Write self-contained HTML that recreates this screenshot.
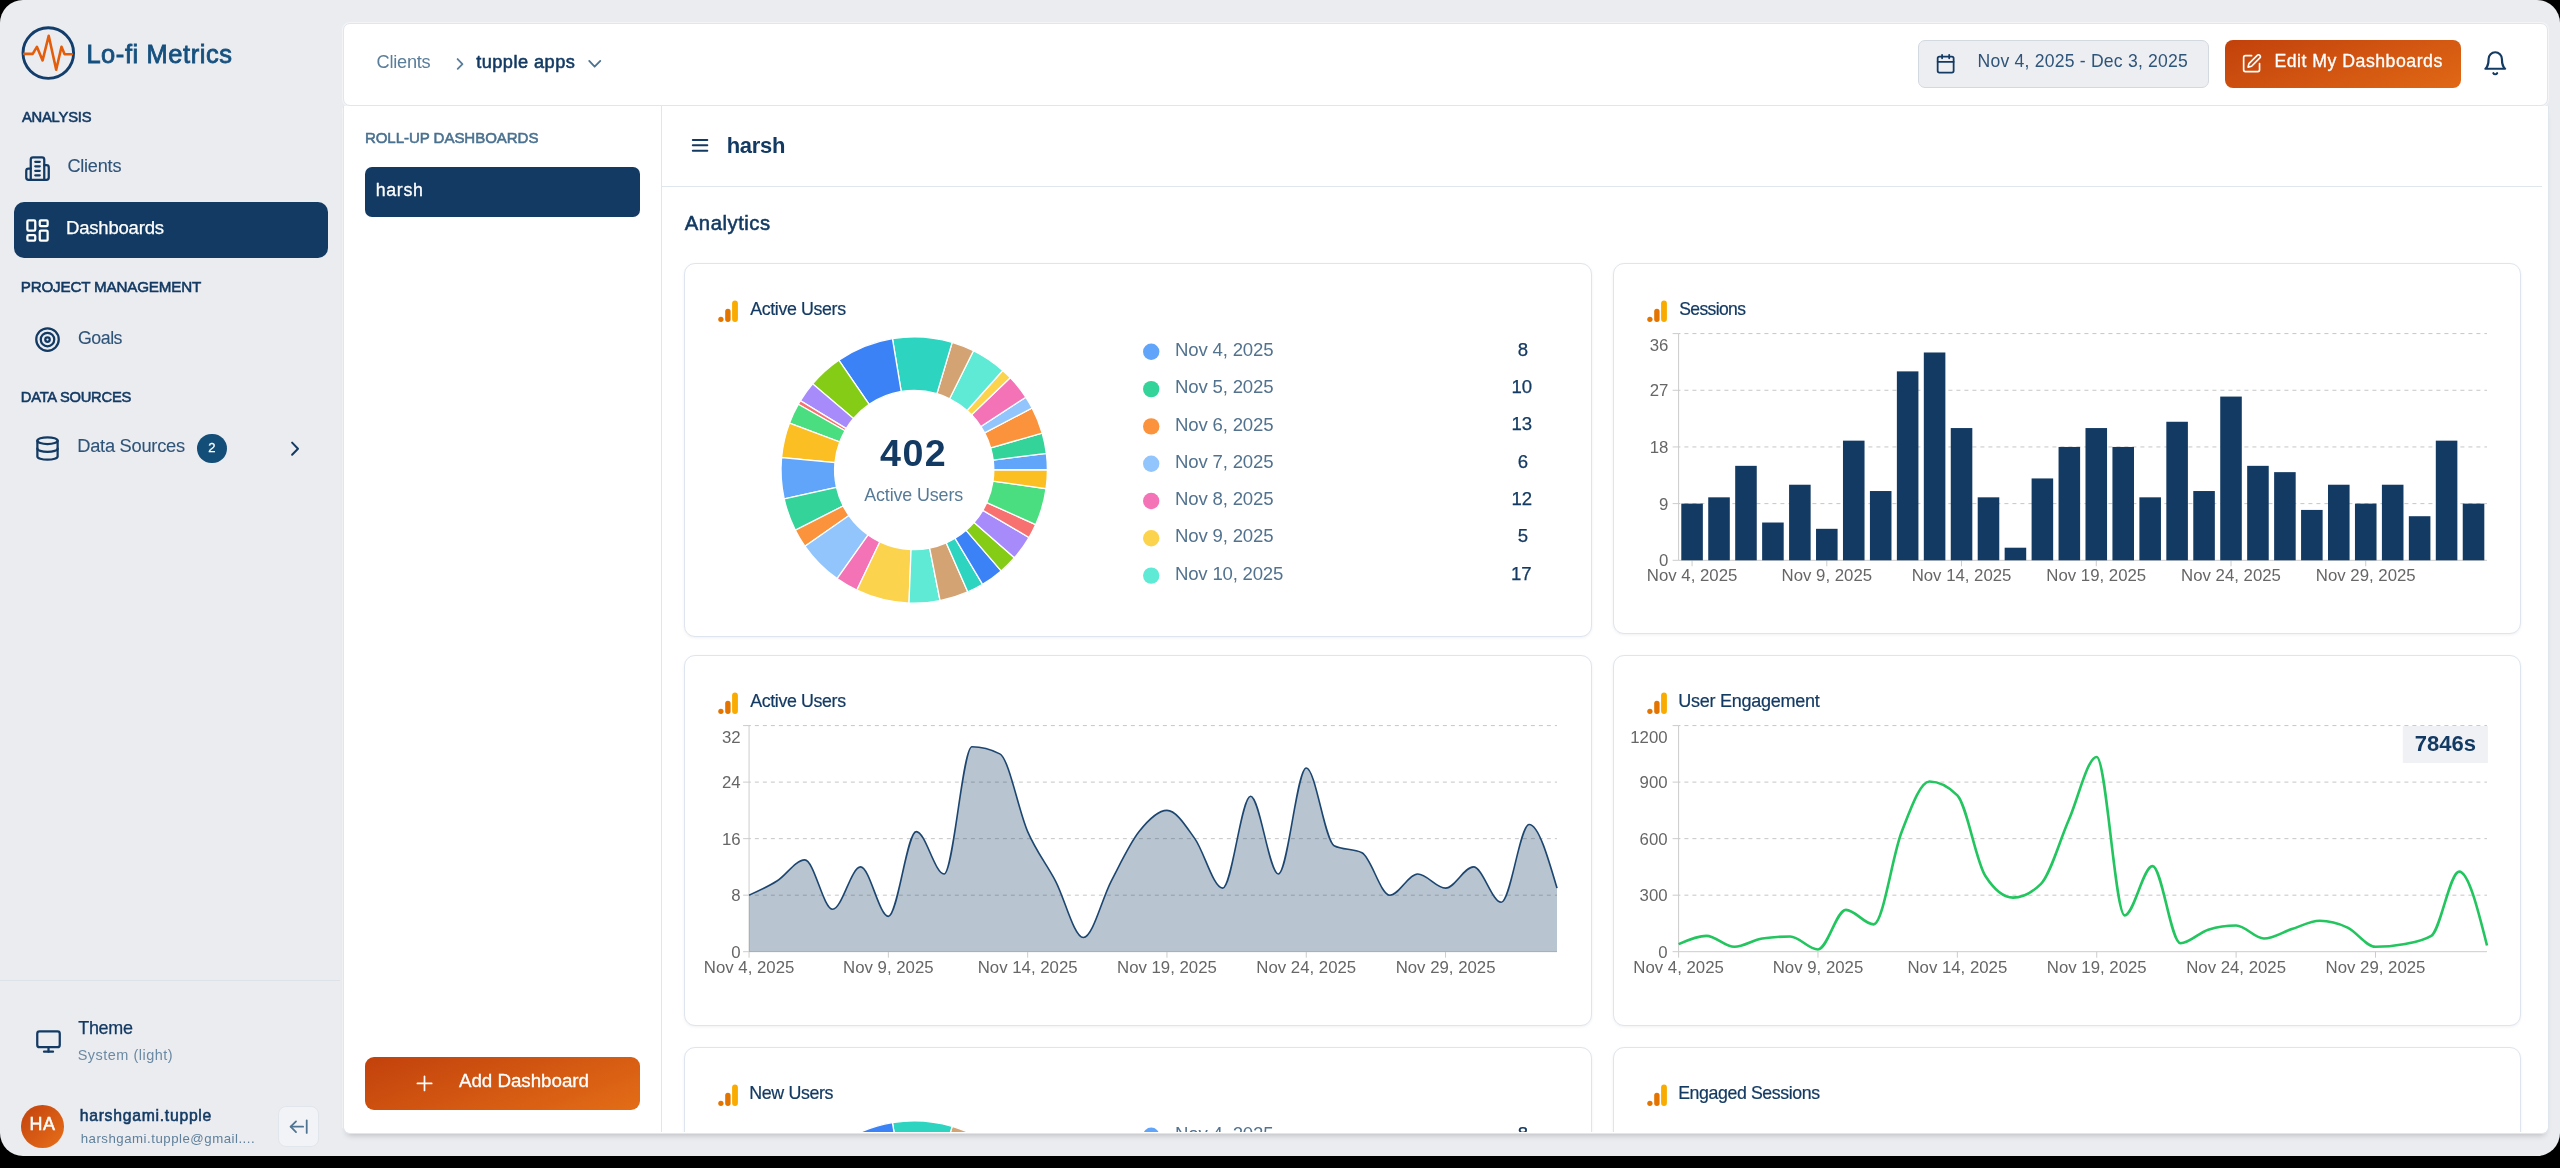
<!DOCTYPE html><html><head><meta charset="utf-8"><style>
*{margin:0;padding:0;box-sizing:border-box}
html,body{width:2560px;height:1168px;overflow:hidden;background:#000}
body{position:relative;font-family:"Liberation Sans",sans-serif}
#root{position:absolute;left:0;top:0;width:2560px;height:1168px;will-change:transform}
.t{position:absolute;white-space:nowrap}
.abs{position:absolute}
</style></head><body><div id="root">
<div class="abs" style="left:0;top:0;width:2560px;height:1156px;background:#ebecf0;border-radius:23px"></div>
<svg class="abs" style="left:0;top:0" width="100" height="100" viewBox="0 0 100 100" fill="none"><circle cx="48.3" cy="53.05" r="25.3" stroke="#133e6b" stroke-width="2.9"/><path d="M24.2 53.9H32.7L36.9 46.8L42.6 60.4L48.7 35.8L56.2 69.7L61.5 46.8L64.6 54.2H71.9" stroke="#e35d0a" stroke-width="2.6" stroke-linecap="round" stroke-linejoin="round"/></svg>
<svg style="position:absolute;left:23.90px;top:154.60px;" width="27.00" height="27.00" viewBox="0 0 24 24" fill="none" stroke="#133a63" stroke-width="2.00" stroke-linecap="round" stroke-linejoin="round"><path d="M6 22V4a2 2 0 0 1 2-2h8a2 2 0 0 1 2 2v18Z"/><path d="M6 12H4a2 2 0 0 0-2 2v6a2 2 0 0 0 2 2h2"/><path d="M18 9h2a2 2 0 0 1 2 2v9a2 2 0 0 1-2 2h-2"/><path d="M10 6h4"/><path d="M10 10h4"/><path d="M10 14h4"/><path d="M10 18h4"/></svg>
<div class="abs" style="left:13.75px;top:202px;width:314px;height:56px;border-radius:10px;background:#133a63"></div>
<svg style="position:absolute;left:23.90px;top:216.60px;" width="27.00" height="27.00" viewBox="0 0 24 24" fill="none" stroke="#ffffff" stroke-width="2.00" stroke-linecap="round" stroke-linejoin="round"><rect width="7" height="9" x="3" y="3" rx="1"/><rect width="7" height="5" x="14" y="3" rx="1"/><rect width="7" height="9" x="14" y="12" rx="1"/><rect width="7" height="5" x="3" y="16" rx="1"/></svg>
<svg style="position:absolute;left:34.40px;top:326.40px;" width="27.00" height="27.00" viewBox="0 0 24 24" fill="none" stroke="#133a63" stroke-width="2.00" stroke-linecap="round" stroke-linejoin="round"><circle cx="12" cy="12" r="10"/><circle cx="12" cy="12" r="6"/><circle cx="12" cy="12" r="2"/></svg>
<svg style="position:absolute;left:34.40px;top:434.90px;" width="27.00" height="27.00" viewBox="0 0 24 24" fill="none" stroke="#133a63" stroke-width="2.00" stroke-linecap="round" stroke-linejoin="round"><ellipse cx="12" cy="5" rx="9" ry="3"/><path d="M3 5V19A9 3 0 0 0 21 19V5"/><path d="M3 12A9 3 0 0 0 21 12"/></svg>
<div class="abs" style="left:196.9px;top:433.6px;width:29.7px;height:29.7px;border-radius:50%;background:#134e78"></div>
<svg class="abs" style="left:280px;top:436px" width="24" height="24" viewBox="0 0 24 24" fill="none" stroke="#133a63" stroke-width="2" stroke-linecap="round" stroke-linejoin="round"><path d="M12.1 6.6L18 12.7L12.1 18.8"/></svg>
<div class="abs" style="left:0;top:979.5px;width:340px;height:1px;background:#dde2e8"></div>
<svg style="position:absolute;left:34.60px;top:1028.05px;" width="27.00" height="27.00" viewBox="0 0 24 24" fill="none" stroke="#133a63" stroke-width="2.00" stroke-linecap="round" stroke-linejoin="round"><rect width="20" height="14" x="2" y="3" rx="2"/><line x1="8" x2="16" y1="21" y2="21"/><line x1="12" x2="12" y1="17" y2="21"/></svg>
<div class="abs" style="left:21.4px;top:1105.3px;width:42.6px;height:42.6px;border-radius:50%;background:linear-gradient(135deg,#c2410c,#e8701a)"></div>
<div class="abs" style="left:278px;top:1106px;width:41.4px;height:41.4px;border-radius:8px;background:#f1f3f6;border:1px solid #e1e6ed"></div>
<svg style="position:absolute;left:288.00px;top:1115.90px;" width="21.40" height="21.40" viewBox="0 0 24 24" fill="none" stroke="#4f7491" stroke-width="2.00" stroke-linecap="round" stroke-linejoin="round"><path d="m9 6-6 6 6 6"/><path d="M3 12h14"/><path d="M21 19V5"/></svg>
<div class="abs" style="left:343px;top:22.5px;width:2205px;height:83px;background:#fff;border:1px solid #e0e6ee;border-radius:7px;box-shadow:0 0 0 1px rgba(255,255,255,0.45)"></div>
<svg class="abs" style="left:440px;top:40px" width="180" height="40" viewBox="0 0 180 40" fill="none" stroke-width="1.8" stroke-linecap="round" stroke-linejoin="round"><path d="M17.6 19.05L22.45 24.07L17.7 28.8" stroke="#5a7d99"/><path d="M149.2 20.9L154.65 26.7L160.3 20.9" stroke="#4d7391"/></svg>
<div class="abs" style="left:1917.8px;top:40.4px;width:290.8px;height:47.2px;border-radius:7px;background:#eceef2;border:1px solid #d3d9e1"></div>
<svg style="position:absolute;left:1935.35px;top:53.35px;" width="21.30" height="21.30" viewBox="0 0 24 24" fill="none" stroke="#133a63" stroke-width="2.00" stroke-linecap="round" stroke-linejoin="round"><rect width="18" height="18" x="3" y="4" rx="2" ry="2"/><line x1="16" x2="16" y1="2" y2="6"/><line x1="8" x2="8" y1="2" y2="6"/><line x1="3" x2="21" y1="10" y2="10"/></svg>
<div class="abs" style="left:2225px;top:40.4px;width:236px;height:47.2px;border-radius:8px;background:linear-gradient(160deg,#c2410c 0%,#e06815 100%)"></div>
<svg style="position:absolute;left:2241.40px;top:52.50px;" width="21.20" height="21.20" viewBox="0 0 24 24" fill="none" stroke="#ffffff" stroke-width="1.90" stroke-linecap="round" stroke-linejoin="round"><path d="M12 3H5a2 2 0 0 0-2 2v14a2 2 0 0 0 2 2h14a2 2 0 0 0 2-2v-7"/><path d="M18.375 2.625a2.121 2.121 0 1 1 3 3L12 15l-4 1 1-4Z"/></svg>
<svg style="position:absolute;left:2482.40px;top:50.20px;" width="26.50" height="26.50" viewBox="0 0 24 24" fill="none" stroke="#133a63" stroke-width="1.95" stroke-linecap="round" stroke-linejoin="round"><path d="M6 8a6 6 0 0 1 12 0c0 7 3 9 3 9H3s3-2 3-9"/><path d="M10.3 21a1.94 1.94 0 0 0 3.4 0"/></svg>
<div class="abs" style="left:343px;top:105.5px;width:2206px;height:1028px;background:#fff;border:1px solid #e0e6ee;border-top:none;border-radius:0 0 7px 7px;box-shadow:0 5px 6px -4px rgba(0,0,0,0.22)"></div>
<div class="abs" style="left:661px;top:106px;width:1px;height:1026px;background:#e0e6ee"></div>
<div class="abs" style="left:342px;top:108px;width:1px;height:1020px;background:rgba(255,255,255,0.4)"></div>
<div class="abs" style="left:662px;top:185.5px;width:1880px;height:1px;background:#e0e6ee"></div>
<div class="abs" style="left:365.3px;top:166.6px;width:274.8px;height:50.9px;border-radius:7px;background:#133a63"></div>
<div class="abs" style="left:365.3px;top:1057.3px;width:274.8px;height:53px;border-radius:9px;background:linear-gradient(160deg,#c2410c 0%,#e36d17 100%)"></div>
<svg class="abs" style="left:416px;top:1075px" width="18" height="18" viewBox="0 0 18 18" fill="none" stroke="#fff" stroke-width="1.7" stroke-linecap="round"><path d="M8.5 1.3V15.4M1.4 8.4H15.7"/></svg>
<svg class="abs" style="left:684px;top:128px" width="32" height="32" viewBox="0 0 32 32" fill="none" stroke="#133a63" stroke-width="2" stroke-linecap="round"><path d="M8.8 12.05H23.3M8.8 17.26H23.3M8.8 22.7H23.3"/></svg>
<div class="abs" style="left:0;top:0;width:2560px;height:1168px;clip-path:inset(187px 18px 36px 662px)"><div class="abs" style="left:684px;top:263px;width:908px;height:374px;border:1px solid #dfe5ee;border-radius:11px;background:#fff;box-shadow:0 1px 3px rgba(16,24,40,0.06)"></div>
<div class="abs" style="left:1613px;top:263px;width:908px;height:371px;border:1px solid #dfe5ee;border-radius:11px;background:#fff;box-shadow:0 1px 3px rgba(16,24,40,0.06)"></div>
<div class="abs" style="left:684px;top:655px;width:908px;height:371px;border:1px solid #dfe5ee;border-radius:11px;background:#fff;box-shadow:0 1px 3px rgba(16,24,40,0.06)"></div>
<div class="abs" style="left:1613px;top:655px;width:908px;height:371px;border:1px solid #dfe5ee;border-radius:11px;background:#fff;box-shadow:0 1px 3px rgba(16,24,40,0.06)"></div>
<div class="abs" style="left:684px;top:1047px;width:908px;height:401px;border:1px solid #dfe5ee;border-radius:11px;background:#fff;box-shadow:0 1px 3px rgba(16,24,40,0.06)"></div>
<div class="abs" style="left:1613px;top:1047px;width:908px;height:401px;border:1px solid #dfe5ee;border-radius:11px;background:#fff;box-shadow:0 1px 3px rgba(16,24,40,0.06)"></div>
<svg class="abs" style="left:716.00px;top:300.00px" width="22" height="24" viewBox="0 0 22 24"><circle cx="4.9" cy="19.3" r="2.65" fill="#e37400"/><rect x="9.2" y="8.7" width="5.4" height="13.3" rx="2.7" fill="#e37400"/><rect x="16.1" y="0.6" width="5.8" height="21.4" rx="2.9" fill="#f9ab00"/></svg>
<svg class="abs" style="left:1645.00px;top:300.00px" width="22" height="24" viewBox="0 0 22 24"><circle cx="4.9" cy="19.3" r="2.65" fill="#e37400"/><rect x="9.2" y="8.7" width="5.4" height="13.3" rx="2.7" fill="#e37400"/><rect x="16.1" y="0.6" width="5.8" height="21.4" rx="2.9" fill="#f9ab00"/></svg>
<svg class="abs" style="left:716.00px;top:692.00px" width="22" height="24" viewBox="0 0 22 24"><circle cx="4.9" cy="19.3" r="2.65" fill="#e37400"/><rect x="9.2" y="8.7" width="5.4" height="13.3" rx="2.7" fill="#e37400"/><rect x="16.1" y="0.6" width="5.8" height="21.4" rx="2.9" fill="#f9ab00"/></svg>
<svg class="abs" style="left:1645.00px;top:692.00px" width="22" height="24" viewBox="0 0 22 24"><circle cx="4.9" cy="19.3" r="2.65" fill="#e37400"/><rect x="9.2" y="8.7" width="5.4" height="13.3" rx="2.7" fill="#e37400"/><rect x="16.1" y="0.6" width="5.8" height="21.4" rx="2.9" fill="#f9ab00"/></svg>
<svg class="abs" style="left:716.00px;top:1084.00px" width="22" height="24" viewBox="0 0 22 24"><circle cx="4.9" cy="19.3" r="2.65" fill="#e37400"/><rect x="9.2" y="8.7" width="5.4" height="13.3" rx="2.7" fill="#e37400"/><rect x="16.1" y="0.6" width="5.8" height="21.4" rx="2.9" fill="#f9ab00"/></svg>
<svg class="abs" style="left:1645.00px;top:1084.00px" width="22" height="24" viewBox="0 0 22 24"><circle cx="4.9" cy="19.3" r="2.65" fill="#e37400"/><rect x="9.2" y="8.7" width="5.4" height="13.3" rx="2.7" fill="#e37400"/><rect x="16.1" y="0.6" width="5.8" height="21.4" rx="2.9" fill="#f9ab00"/></svg>
<svg class="abs" style="left:0;top:0" width="2560" height="1168" viewBox="0 0 2560 1168" font-family="Liberation Sans, sans-serif"><line x1="1672.60" x2="1678.60" y1="560.30" y2="560.30" stroke="#cccccc"/><text x="1668.40" y="566.30" text-anchor="end" fill="#666666" font-size="16.8">0</text><line x1="1678.60" x2="2487.00" y1="503.62" y2="503.62" stroke="#c6c6c6" stroke-dasharray="4 4" stroke-dashoffset="2.2"/><line x1="1672.60" x2="1678.60" y1="503.62" y2="503.62" stroke="#cccccc"/><text x="1668.40" y="509.62" text-anchor="end" fill="#666666" font-size="16.8">9</text><line x1="1678.60" x2="2487.00" y1="446.95" y2="446.95" stroke="#c6c6c6" stroke-dasharray="4 4" stroke-dashoffset="2.2"/><line x1="1672.60" x2="1678.60" y1="446.95" y2="446.95" stroke="#cccccc"/><text x="1668.40" y="452.95" text-anchor="end" fill="#666666" font-size="16.8">18</text><line x1="1678.60" x2="2487.00" y1="390.27" y2="390.27" stroke="#c6c6c6" stroke-dasharray="4 4" stroke-dashoffset="2.2"/><line x1="1672.60" x2="1678.60" y1="390.27" y2="390.27" stroke="#cccccc"/><text x="1668.40" y="396.27" text-anchor="end" fill="#666666" font-size="16.8">27</text><line x1="1678.60" x2="2487.00" y1="333.60" y2="333.60" stroke="#c6c6c6" stroke-dasharray="4 4" stroke-dashoffset="2.2"/><line x1="1672.60" x2="1678.60" y1="333.60" y2="333.60" stroke="#cccccc"/><text x="1668.40" y="350.60" text-anchor="end" fill="#666666" font-size="16.8">36</text><line x1="1678.60" x2="1678.60" y1="333.60" y2="560.30" stroke="#cccccc"/><line x1="1678.60" x2="2487.00" y1="560.30" y2="560.30" stroke="#cccccc"/><line x1="1692.07" x2="1692.07" y1="560.30" y2="566.30" stroke="#cccccc"/><text x="1692.07" y="581.30" text-anchor="middle" fill="#666666" font-size="16.8">Nov 4, 2025</text><line x1="1826.81" x2="1826.81" y1="560.30" y2="566.30" stroke="#cccccc"/><text x="1826.81" y="581.30" text-anchor="middle" fill="#666666" font-size="16.8">Nov 9, 2025</text><line x1="1961.54" x2="1961.54" y1="560.30" y2="566.30" stroke="#cccccc"/><text x="1961.54" y="581.30" text-anchor="middle" fill="#666666" font-size="16.8">Nov 14, 2025</text><line x1="2096.27" x2="2096.27" y1="560.30" y2="566.30" stroke="#cccccc"/><text x="2096.27" y="581.30" text-anchor="middle" fill="#666666" font-size="16.8">Nov 19, 2025</text><line x1="2231.01" x2="2231.01" y1="560.30" y2="566.30" stroke="#cccccc"/><text x="2231.01" y="581.30" text-anchor="middle" fill="#666666" font-size="16.8">Nov 24, 2025</text><line x1="2365.74" x2="2365.74" y1="560.30" y2="566.30" stroke="#cccccc"/><text x="2365.74" y="581.30" text-anchor="middle" fill="#666666" font-size="16.8">Nov 29, 2025</text><rect x="1681.29" y="503.62" width="21.56" height="56.67" fill="#133a63"/><rect x="1708.24" y="497.33" width="21.56" height="62.97" fill="#133a63"/><rect x="1735.19" y="465.84" width="21.56" height="94.46" fill="#133a63"/><rect x="1762.13" y="522.52" width="21.56" height="37.78" fill="#133a63"/><rect x="1789.08" y="484.73" width="21.56" height="75.57" fill="#133a63"/><rect x="1816.03" y="528.81" width="21.56" height="31.49" fill="#133a63"/><rect x="1842.97" y="440.65" width="21.56" height="119.65" fill="#133a63"/><rect x="1869.92" y="491.03" width="21.56" height="69.27" fill="#133a63"/><rect x="1896.87" y="371.38" width="21.56" height="188.92" fill="#133a63"/><rect x="1923.81" y="352.49" width="21.56" height="207.81" fill="#133a63"/><rect x="1950.76" y="428.06" width="21.56" height="132.24" fill="#133a63"/><rect x="1977.71" y="497.33" width="21.56" height="62.97" fill="#133a63"/><rect x="2004.65" y="547.71" width="21.56" height="12.59" fill="#133a63"/><rect x="2031.60" y="478.44" width="21.56" height="81.86" fill="#133a63"/><rect x="2058.55" y="446.95" width="21.56" height="113.35" fill="#133a63"/><rect x="2085.49" y="428.06" width="21.56" height="132.24" fill="#133a63"/><rect x="2112.44" y="446.95" width="21.56" height="113.35" fill="#133a63"/><rect x="2139.39" y="497.33" width="21.56" height="62.97" fill="#133a63"/><rect x="2166.33" y="421.76" width="21.56" height="138.54" fill="#133a63"/><rect x="2193.28" y="491.03" width="21.56" height="69.27" fill="#133a63"/><rect x="2220.23" y="396.57" width="21.56" height="163.73" fill="#133a63"/><rect x="2247.17" y="465.84" width="21.56" height="94.46" fill="#133a63"/><rect x="2274.12" y="472.14" width="21.56" height="88.16" fill="#133a63"/><rect x="2301.07" y="509.92" width="21.56" height="50.38" fill="#133a63"/><rect x="2328.01" y="484.73" width="21.56" height="75.57" fill="#133a63"/><rect x="2354.96" y="503.62" width="21.56" height="56.67" fill="#133a63"/><rect x="2381.91" y="484.73" width="21.56" height="75.57" fill="#133a63"/><rect x="2408.85" y="516.22" width="21.56" height="44.08" fill="#133a63"/><rect x="2435.80" y="440.65" width="21.56" height="119.65" fill="#133a63"/><rect x="2462.75" y="503.62" width="21.56" height="56.67" fill="#133a63"/><line x1="743.07" x2="749.07" y1="951.70" y2="951.70" stroke="#cccccc"/><text x="740.57" y="957.70" text-anchor="end" fill="#666666" font-size="16.8">0</text><line x1="749.07" x2="1557.00" y1="895.18" y2="895.18" stroke="#c6c6c6" stroke-dasharray="4 4" stroke-dashoffset="2.2"/><line x1="743.07" x2="749.07" y1="895.18" y2="895.18" stroke="#cccccc"/><text x="740.57" y="901.18" text-anchor="end" fill="#666666" font-size="16.8">8</text><line x1="749.07" x2="1557.00" y1="838.65" y2="838.65" stroke="#c6c6c6" stroke-dasharray="4 4" stroke-dashoffset="2.2"/><line x1="743.07" x2="749.07" y1="838.65" y2="838.65" stroke="#cccccc"/><text x="740.57" y="844.65" text-anchor="end" fill="#666666" font-size="16.8">16</text><line x1="749.07" x2="1557.00" y1="782.12" y2="782.12" stroke="#c6c6c6" stroke-dasharray="4 4" stroke-dashoffset="2.2"/><line x1="743.07" x2="749.07" y1="782.12" y2="782.12" stroke="#cccccc"/><text x="740.57" y="788.12" text-anchor="end" fill="#666666" font-size="16.8">24</text><line x1="749.07" x2="1557.00" y1="725.60" y2="725.60" stroke="#c6c6c6" stroke-dasharray="4 4" stroke-dashoffset="2.2"/><line x1="743.07" x2="749.07" y1="725.60" y2="725.60" stroke="#cccccc"/><text x="740.57" y="742.60" text-anchor="end" fill="#666666" font-size="16.8">32</text><line x1="749.07" x2="749.07" y1="725.60" y2="951.70" stroke="#cccccc"/><line x1="749.07" x2="1557.00" y1="951.70" y2="951.70" stroke="#cccccc"/><line x1="749.07" x2="749.07" y1="951.70" y2="957.70" stroke="#cccccc"/><text x="749.07" y="972.70" text-anchor="middle" fill="#666666" font-size="16.8">Nov 4, 2025</text><line x1="888.37" x2="888.37" y1="951.70" y2="957.70" stroke="#cccccc"/><text x="888.37" y="972.70" text-anchor="middle" fill="#666666" font-size="16.8">Nov 9, 2025</text><line x1="1027.67" x2="1027.67" y1="951.70" y2="957.70" stroke="#cccccc"/><text x="1027.67" y="972.70" text-anchor="middle" fill="#666666" font-size="16.8">Nov 14, 2025</text><line x1="1166.96" x2="1166.96" y1="951.70" y2="957.70" stroke="#cccccc"/><text x="1166.96" y="972.70" text-anchor="middle" fill="#666666" font-size="16.8">Nov 19, 2025</text><line x1="1306.26" x2="1306.26" y1="951.70" y2="957.70" stroke="#cccccc"/><text x="1306.26" y="972.70" text-anchor="middle" fill="#666666" font-size="16.8">Nov 24, 2025</text><line x1="1445.56" x2="1445.56" y1="951.70" y2="957.70" stroke="#cccccc"/><text x="1445.56" y="972.70" text-anchor="middle" fill="#666666" font-size="16.8">Nov 29, 2025</text><path d="M749.07,895.18C758.36,891.05,767.64,886.93,776.93,881.04C786.22,875.16,795.50,859.85,804.79,859.85C814.08,859.85,823.36,909.31,832.65,909.31C841.94,909.31,851.22,866.91,860.51,866.91C869.80,866.91,879.08,916.37,888.37,916.37C897.65,916.37,906.94,831.58,916.23,831.58C925.51,831.58,934.80,873.98,944.09,873.98C953.37,873.98,962.66,746.80,971.95,746.80C981.23,746.80,990.52,749.15,999.81,753.86C1009.09,758.57,1018.38,810.39,1027.67,831.58C1036.95,852.78,1046.24,863.38,1055.53,881.04C1064.81,898.71,1074.10,937.57,1083.39,937.57C1092.67,937.57,1101.96,898.71,1111.25,881.04C1120.53,863.38,1129.82,843.36,1139.11,831.58C1148.39,819.81,1157.68,810.39,1166.96,810.39C1176.25,810.39,1185.54,825.70,1194.82,838.65C1204.11,851.60,1213.40,888.11,1222.68,888.11C1231.97,888.11,1241.26,796.26,1250.54,796.26C1259.83,796.26,1269.12,873.98,1278.40,873.98C1287.69,873.98,1296.98,767.99,1306.26,767.99C1315.55,767.99,1324.84,841.01,1334.12,845.72C1343.41,850.43,1352.70,848.07,1361.98,852.78C1371.27,857.49,1380.56,895.18,1389.84,895.18C1399.13,895.18,1408.42,873.98,1417.70,873.98C1426.99,873.98,1436.27,888.11,1445.56,888.11C1454.85,888.11,1464.13,866.91,1473.42,866.91C1482.71,866.91,1491.99,902.24,1501.28,902.24C1510.57,902.24,1519.85,824.52,1529.14,824.52C1538.43,824.52,1547.71,856.31,1557.00,888.11L1557.00,951.70L749.07,951.70Z" fill="#133a63" fill-opacity="0.3"/><path d="M749.07,895.18C758.36,891.05,767.64,886.93,776.93,881.04C786.22,875.16,795.50,859.85,804.79,859.85C814.08,859.85,823.36,909.31,832.65,909.31C841.94,909.31,851.22,866.91,860.51,866.91C869.80,866.91,879.08,916.37,888.37,916.37C897.65,916.37,906.94,831.58,916.23,831.58C925.51,831.58,934.80,873.98,944.09,873.98C953.37,873.98,962.66,746.80,971.95,746.80C981.23,746.80,990.52,749.15,999.81,753.86C1009.09,758.57,1018.38,810.39,1027.67,831.58C1036.95,852.78,1046.24,863.38,1055.53,881.04C1064.81,898.71,1074.10,937.57,1083.39,937.57C1092.67,937.57,1101.96,898.71,1111.25,881.04C1120.53,863.38,1129.82,843.36,1139.11,831.58C1148.39,819.81,1157.68,810.39,1166.96,810.39C1176.25,810.39,1185.54,825.70,1194.82,838.65C1204.11,851.60,1213.40,888.11,1222.68,888.11C1231.97,888.11,1241.26,796.26,1250.54,796.26C1259.83,796.26,1269.12,873.98,1278.40,873.98C1287.69,873.98,1296.98,767.99,1306.26,767.99C1315.55,767.99,1324.84,841.01,1334.12,845.72C1343.41,850.43,1352.70,848.07,1361.98,852.78C1371.27,857.49,1380.56,895.18,1389.84,895.18C1399.13,895.18,1408.42,873.98,1417.70,873.98C1426.99,873.98,1436.27,888.11,1445.56,888.11C1454.85,888.11,1464.13,866.91,1473.42,866.91C1482.71,866.91,1491.99,902.24,1501.28,902.24C1510.57,902.24,1519.85,824.52,1529.14,824.52C1538.43,824.52,1547.71,856.31,1557.00,888.11" fill="none" stroke="#1c4670" stroke-width="1.6"/><line x1="1672.60" x2="1678.60" y1="951.70" y2="951.70" stroke="#cccccc"/><text x="1667.60" y="957.70" text-anchor="end" fill="#666666" font-size="16.8">0</text><line x1="1678.60" x2="2487.00" y1="895.18" y2="895.18" stroke="#c6c6c6" stroke-dasharray="4 4" stroke-dashoffset="2.2"/><line x1="1672.60" x2="1678.60" y1="895.18" y2="895.18" stroke="#cccccc"/><text x="1667.60" y="901.18" text-anchor="end" fill="#666666" font-size="16.8">300</text><line x1="1678.60" x2="2487.00" y1="838.65" y2="838.65" stroke="#c6c6c6" stroke-dasharray="4 4" stroke-dashoffset="2.2"/><line x1="1672.60" x2="1678.60" y1="838.65" y2="838.65" stroke="#cccccc"/><text x="1667.60" y="844.65" text-anchor="end" fill="#666666" font-size="16.8">600</text><line x1="1678.60" x2="2487.00" y1="782.12" y2="782.12" stroke="#c6c6c6" stroke-dasharray="4 4" stroke-dashoffset="2.2"/><line x1="1672.60" x2="1678.60" y1="782.12" y2="782.12" stroke="#cccccc"/><text x="1667.60" y="788.12" text-anchor="end" fill="#666666" font-size="16.8">900</text><line x1="1678.60" x2="2487.00" y1="725.60" y2="725.60" stroke="#c6c6c6" stroke-dasharray="4 4" stroke-dashoffset="2.2"/><line x1="1672.60" x2="1678.60" y1="725.60" y2="725.60" stroke="#cccccc"/><text x="1667.60" y="742.60" text-anchor="end" fill="#666666" font-size="16.8">1200</text><line x1="1678.60" x2="1678.60" y1="725.60" y2="951.70" stroke="#cccccc"/><line x1="1678.60" x2="2487.00" y1="951.70" y2="951.70" stroke="#cccccc"/><line x1="1678.60" x2="1678.60" y1="951.70" y2="957.70" stroke="#cccccc"/><text x="1678.60" y="972.70" text-anchor="middle" fill="#666666" font-size="16.8">Nov 4, 2025</text><line x1="1817.98" x2="1817.98" y1="951.70" y2="957.70" stroke="#cccccc"/><text x="1817.98" y="972.70" text-anchor="middle" fill="#666666" font-size="16.8">Nov 9, 2025</text><line x1="1957.36" x2="1957.36" y1="951.70" y2="957.70" stroke="#cccccc"/><text x="1957.36" y="972.70" text-anchor="middle" fill="#666666" font-size="16.8">Nov 14, 2025</text><line x1="2096.74" x2="2096.74" y1="951.70" y2="957.70" stroke="#cccccc"/><text x="2096.74" y="972.70" text-anchor="middle" fill="#666666" font-size="16.8">Nov 19, 2025</text><line x1="2236.12" x2="2236.12" y1="951.70" y2="957.70" stroke="#cccccc"/><text x="2236.12" y="972.70" text-anchor="middle" fill="#666666" font-size="16.8">Nov 24, 2025</text><line x1="2375.50" x2="2375.50" y1="951.70" y2="957.70" stroke="#cccccc"/><text x="2375.50" y="972.70" text-anchor="middle" fill="#666666" font-size="16.8">Nov 29, 2025</text><path d="M1678.60,944.16C1687.89,940.02,1697.18,935.87,1706.48,935.87C1715.77,935.87,1725.06,946.80,1734.35,946.80C1743.64,946.80,1752.94,939.89,1762.23,938.51C1771.52,937.13,1780.81,936.44,1790.10,936.44C1799.40,936.44,1808.69,949.44,1817.98,949.44C1827.27,949.44,1836.56,909.87,1845.86,909.87C1855.15,909.87,1864.44,924.38,1873.73,924.38C1883.02,924.38,1892.31,855.86,1901.61,832.06C1910.90,808.25,1920.19,781.56,1929.48,781.56C1938.77,781.56,1948.07,786.14,1957.36,795.31C1966.65,804.48,1975.94,861.20,1985.23,875.77C1994.53,890.34,2003.82,897.62,2013.11,897.62C2022.40,897.62,2031.69,893.04,2040.99,883.87C2050.28,874.70,2059.57,840.94,2068.86,819.81C2078.15,798.67,2087.45,757.07,2096.74,757.07C2106.03,757.07,2115.32,915.34,2124.61,915.34C2133.91,915.34,2143.20,866.16,2152.49,866.16C2161.78,866.16,2171.07,943.22,2180.37,943.22C2189.66,943.22,2198.95,932.42,2208.24,929.66C2217.53,926.89,2226.83,925.51,2236.12,925.51C2245.41,925.51,2254.70,938.51,2263.99,938.51C2273.29,938.51,2282.58,932.04,2291.87,929.09C2301.16,926.14,2310.45,920.80,2319.74,920.80C2329.04,920.80,2338.33,923.25,2347.62,927.58C2356.91,931.92,2366.20,946.80,2375.50,946.80C2384.79,946.80,2394.08,945.92,2403.37,944.16C2412.66,942.40,2421.96,941.40,2431.25,935.87C2440.54,930.35,2449.83,871.62,2459.12,871.62C2468.42,871.62,2477.71,908.55,2487.00,945.48" fill="none" stroke="#22c55e" stroke-width="2.6"/><rect x="2402.8" y="726" width="85.1" height="37" fill="#eff1f4"/><path d="M1047.40,470.00 A133.20,133.20 0 0 0 1046.36,453.39 L993.18,460.07 A79.60,79.60 0 0 1 993.80,470.00 Z" fill="#60a5fa" stroke="#fff" stroke-width="1.3"/><path d="M1046.36,453.39 A133.20,133.20 0 0 0 1042.16,433.02 L990.67,447.90 A79.60,79.60 0 0 1 993.18,460.07 Z" fill="#34d399" stroke="#fff" stroke-width="1.3"/><path d="M1042.16,433.02 A133.20,133.20 0 0 0 1032.07,407.96 L984.64,432.92 A79.60,79.60 0 0 1 990.67,447.90 Z" fill="#fb923c" stroke="#fff" stroke-width="1.3"/><path d="M1032.07,407.96 A133.20,133.20 0 0 0 1025.74,397.19 L980.86,426.49 A79.60,79.60 0 0 1 984.64,432.92 Z" fill="#93c5fd" stroke="#fff" stroke-width="1.3"/><path d="M1025.74,397.19 A133.20,133.20 0 0 0 1010.21,377.67 L971.57,414.82 A79.60,79.60 0 0 1 980.86,426.49 Z" fill="#f472b6" stroke="#fff" stroke-width="1.3"/><path d="M1010.21,377.67 A133.20,133.20 0 0 0 1002.71,370.46 L967.09,410.51 A79.60,79.60 0 0 1 971.57,414.82 Z" fill="#fcd34d" stroke="#fff" stroke-width="1.3"/><path d="M1002.71,370.46 A133.20,133.20 0 0 0 973.46,350.71 L949.62,398.71 A79.60,79.60 0 0 1 967.09,410.51 Z" fill="#5eead4" stroke="#fff" stroke-width="1.3"/><path d="M973.46,350.71 A133.20,133.20 0 0 0 952.18,342.33 L936.90,393.70 A79.60,79.60 0 0 1 949.62,398.71 Z" fill="#d4a373" stroke="#fff" stroke-width="1.3"/><path d="M952.18,342.33 A133.20,133.20 0 0 0 892.44,338.59 L901.20,391.47 A79.60,79.60 0 0 1 936.90,393.70 Z" fill="#2dd4bf" stroke="#fff" stroke-width="1.3"/><path d="M892.44,338.59 A133.20,133.20 0 0 0 838.80,360.20 L869.14,404.38 A79.60,79.60 0 0 1 901.20,391.47 Z" fill="#3b82f6" stroke="#fff" stroke-width="1.3"/><path d="M838.80,360.20 A133.20,133.20 0 0 0 812.61,383.85 L853.49,418.52 A79.60,79.60 0 0 1 869.14,404.38 Z" fill="#84cc16" stroke="#fff" stroke-width="1.3"/><path d="M812.61,383.85 A133.20,133.20 0 0 0 800.44,400.71 L846.22,428.59 A79.60,79.60 0 0 1 853.49,418.52 Z" fill="#a78bfa" stroke="#fff" stroke-width="1.3"/><path d="M800.44,400.71 A133.20,133.20 0 0 0 798.33,404.30 L844.96,430.74 A79.60,79.60 0 0 1 846.22,428.59 Z" fill="#f87171" stroke="#fff" stroke-width="1.3"/><path d="M798.33,404.30 A133.20,133.20 0 0 0 789.51,423.14 L839.69,442.00 A79.60,79.60 0 0 1 844.96,430.74 Z" fill="#4ade80" stroke="#fff" stroke-width="1.3"/><path d="M789.51,423.14 A133.20,133.20 0 0 0 781.59,457.53 L834.95,462.55 A79.60,79.60 0 0 1 839.69,442.00 Z" fill="#fbbf24" stroke="#fff" stroke-width="1.3"/><path d="M781.59,457.53 A133.20,133.20 0 0 0 784.18,498.91 L836.50,487.28 A79.60,79.60 0 0 1 834.95,462.55 Z" fill="#60a5fa" stroke="#fff" stroke-width="1.3"/><path d="M784.18,498.91 A133.20,133.20 0 0 0 795.38,530.19 L843.19,505.97 A79.60,79.60 0 0 1 836.50,487.28 Z" fill="#34d399" stroke="#fff" stroke-width="1.3"/><path d="M795.38,530.19 A133.20,133.20 0 0 0 804.99,546.26 L848.94,515.57 A79.60,79.60 0 0 1 843.19,505.97 Z" fill="#fb923c" stroke="#fff" stroke-width="1.3"/><path d="M804.99,546.26 A133.20,133.20 0 0 0 837.09,578.61 L868.12,534.91 A79.60,79.60 0 0 1 848.94,515.57 Z" fill="#93c5fd" stroke="#fff" stroke-width="1.3"/><path d="M837.09,578.61 A133.20,133.20 0 0 0 856.81,590.20 L879.90,541.83 A79.60,79.60 0 0 1 868.12,534.91 Z" fill="#f472b6" stroke="#fff" stroke-width="1.3"/><path d="M856.81,590.20 A133.20,133.20 0 0 0 909.00,603.10 L911.09,549.54 A79.60,79.60 0 0 1 879.90,541.83 Z" fill="#fcd34d" stroke="#fff" stroke-width="1.3"/><path d="M909.00,603.10 A133.20,133.20 0 0 0 940.06,600.67 L929.65,548.09 A79.60,79.60 0 0 1 911.09,549.54 Z" fill="#5eead4" stroke="#fff" stroke-width="1.3"/><path d="M940.06,600.67 A133.20,133.20 0 0 0 967.81,591.94 L946.23,542.87 A79.60,79.60 0 0 1 929.65,548.09 Z" fill="#d4a373" stroke="#fff" stroke-width="1.3"/><path d="M967.81,591.94 A133.20,133.20 0 0 0 982.59,584.30 L955.07,538.31 A79.60,79.60 0 0 1 946.23,542.87 Z" fill="#2dd4bf" stroke="#fff" stroke-width="1.3"/><path d="M982.59,584.30 A133.20,133.20 0 0 0 1001.14,570.91 L966.16,530.31 A79.60,79.60 0 0 1 955.07,538.31 Z" fill="#3b82f6" stroke="#fff" stroke-width="1.3"/><path d="M1001.14,570.91 A133.20,133.20 0 0 0 1014.43,557.73 L974.10,522.43 A79.60,79.60 0 0 1 966.16,530.31 Z" fill="#84cc16" stroke="#fff" stroke-width="1.3"/><path d="M1014.43,557.73 A133.20,133.20 0 0 0 1029.03,537.50 L982.82,510.34 A79.60,79.60 0 0 1 974.10,522.43 Z" fill="#a78bfa" stroke="#fff" stroke-width="1.3"/><path d="M1029.03,537.50 A133.20,133.20 0 0 0 1035.71,524.56 L986.82,502.60 A79.60,79.60 0 0 1 982.82,510.34 Z" fill="#f87171" stroke="#fff" stroke-width="1.3"/><path d="M1035.71,524.56 A133.20,133.20 0 0 0 1046.08,488.68 L993.01,481.16 A79.60,79.60 0 0 1 986.82,502.60 Z" fill="#4ade80" stroke="#fff" stroke-width="1.3"/><path d="M1046.08,488.68 A133.20,133.20 0 0 0 1047.40,470.00 L993.80,470.00 A79.60,79.60 0 0 1 993.01,481.16 Z" fill="#fbbf24" stroke="#fff" stroke-width="1.3"/><path d="M1047.40,1254.00 A133.20,133.20 0 0 0 1046.36,1237.39 L993.18,1244.07 A79.60,79.60 0 0 1 993.80,1254.00 Z" fill="#60a5fa" stroke="#fff" stroke-width="1.3"/><path d="M1046.36,1237.39 A133.20,133.20 0 0 0 1042.16,1217.02 L990.67,1231.90 A79.60,79.60 0 0 1 993.18,1244.07 Z" fill="#34d399" stroke="#fff" stroke-width="1.3"/><path d="M1042.16,1217.02 A133.20,133.20 0 0 0 1032.07,1191.96 L984.64,1216.92 A79.60,79.60 0 0 1 990.67,1231.90 Z" fill="#fb923c" stroke="#fff" stroke-width="1.3"/><path d="M1032.07,1191.96 A133.20,133.20 0 0 0 1025.74,1181.19 L980.86,1210.49 A79.60,79.60 0 0 1 984.64,1216.92 Z" fill="#93c5fd" stroke="#fff" stroke-width="1.3"/><path d="M1025.74,1181.19 A133.20,133.20 0 0 0 1010.21,1161.67 L971.57,1198.82 A79.60,79.60 0 0 1 980.86,1210.49 Z" fill="#f472b6" stroke="#fff" stroke-width="1.3"/><path d="M1010.21,1161.67 A133.20,133.20 0 0 0 1002.71,1154.46 L967.09,1194.51 A79.60,79.60 0 0 1 971.57,1198.82 Z" fill="#fcd34d" stroke="#fff" stroke-width="1.3"/><path d="M1002.71,1154.46 A133.20,133.20 0 0 0 973.46,1134.71 L949.62,1182.71 A79.60,79.60 0 0 1 967.09,1194.51 Z" fill="#5eead4" stroke="#fff" stroke-width="1.3"/><path d="M973.46,1134.71 A133.20,133.20 0 0 0 952.18,1126.33 L936.90,1177.70 A79.60,79.60 0 0 1 949.62,1182.71 Z" fill="#d4a373" stroke="#fff" stroke-width="1.3"/><path d="M952.18,1126.33 A133.20,133.20 0 0 0 892.44,1122.59 L901.20,1175.47 A79.60,79.60 0 0 1 936.90,1177.70 Z" fill="#2dd4bf" stroke="#fff" stroke-width="1.3"/><path d="M892.44,1122.59 A133.20,133.20 0 0 0 838.80,1144.20 L869.14,1188.38 A79.60,79.60 0 0 1 901.20,1175.47 Z" fill="#3b82f6" stroke="#fff" stroke-width="1.3"/><path d="M838.80,1144.20 A133.20,133.20 0 0 0 812.61,1167.85 L853.49,1202.52 A79.60,79.60 0 0 1 869.14,1188.38 Z" fill="#84cc16" stroke="#fff" stroke-width="1.3"/><path d="M812.61,1167.85 A133.20,133.20 0 0 0 800.44,1184.71 L846.22,1212.59 A79.60,79.60 0 0 1 853.49,1202.52 Z" fill="#a78bfa" stroke="#fff" stroke-width="1.3"/><path d="M800.44,1184.71 A133.20,133.20 0 0 0 798.33,1188.30 L844.96,1214.74 A79.60,79.60 0 0 1 846.22,1212.59 Z" fill="#f87171" stroke="#fff" stroke-width="1.3"/><path d="M798.33,1188.30 A133.20,133.20 0 0 0 789.51,1207.14 L839.69,1226.00 A79.60,79.60 0 0 1 844.96,1214.74 Z" fill="#4ade80" stroke="#fff" stroke-width="1.3"/><path d="M789.51,1207.14 A133.20,133.20 0 0 0 781.59,1241.53 L834.95,1246.55 A79.60,79.60 0 0 1 839.69,1226.00 Z" fill="#fbbf24" stroke="#fff" stroke-width="1.3"/><path d="M781.59,1241.53 A133.20,133.20 0 0 0 784.18,1282.91 L836.50,1271.28 A79.60,79.60 0 0 1 834.95,1246.55 Z" fill="#60a5fa" stroke="#fff" stroke-width="1.3"/><path d="M784.18,1282.91 A133.20,133.20 0 0 0 795.38,1314.19 L843.19,1289.97 A79.60,79.60 0 0 1 836.50,1271.28 Z" fill="#34d399" stroke="#fff" stroke-width="1.3"/><path d="M795.38,1314.19 A133.20,133.20 0 0 0 804.99,1330.26 L848.94,1299.57 A79.60,79.60 0 0 1 843.19,1289.97 Z" fill="#fb923c" stroke="#fff" stroke-width="1.3"/><path d="M804.99,1330.26 A133.20,133.20 0 0 0 837.09,1362.61 L868.12,1318.91 A79.60,79.60 0 0 1 848.94,1299.57 Z" fill="#93c5fd" stroke="#fff" stroke-width="1.3"/><path d="M837.09,1362.61 A133.20,133.20 0 0 0 856.81,1374.20 L879.90,1325.83 A79.60,79.60 0 0 1 868.12,1318.91 Z" fill="#f472b6" stroke="#fff" stroke-width="1.3"/><path d="M856.81,1374.20 A133.20,133.20 0 0 0 909.00,1387.10 L911.09,1333.54 A79.60,79.60 0 0 1 879.90,1325.83 Z" fill="#fcd34d" stroke="#fff" stroke-width="1.3"/><path d="M909.00,1387.10 A133.20,133.20 0 0 0 940.06,1384.67 L929.65,1332.09 A79.60,79.60 0 0 1 911.09,1333.54 Z" fill="#5eead4" stroke="#fff" stroke-width="1.3"/><path d="M940.06,1384.67 A133.20,133.20 0 0 0 967.81,1375.94 L946.23,1326.87 A79.60,79.60 0 0 1 929.65,1332.09 Z" fill="#d4a373" stroke="#fff" stroke-width="1.3"/><path d="M967.81,1375.94 A133.20,133.20 0 0 0 982.59,1368.30 L955.07,1322.31 A79.60,79.60 0 0 1 946.23,1326.87 Z" fill="#2dd4bf" stroke="#fff" stroke-width="1.3"/><path d="M982.59,1368.30 A133.20,133.20 0 0 0 1001.14,1354.91 L966.16,1314.31 A79.60,79.60 0 0 1 955.07,1322.31 Z" fill="#3b82f6" stroke="#fff" stroke-width="1.3"/><path d="M1001.14,1354.91 A133.20,133.20 0 0 0 1014.43,1341.73 L974.10,1306.43 A79.60,79.60 0 0 1 966.16,1314.31 Z" fill="#84cc16" stroke="#fff" stroke-width="1.3"/><path d="M1014.43,1341.73 A133.20,133.20 0 0 0 1029.03,1321.50 L982.82,1294.34 A79.60,79.60 0 0 1 974.10,1306.43 Z" fill="#a78bfa" stroke="#fff" stroke-width="1.3"/><path d="M1029.03,1321.50 A133.20,133.20 0 0 0 1035.71,1308.56 L986.82,1286.60 A79.60,79.60 0 0 1 982.82,1294.34 Z" fill="#f87171" stroke="#fff" stroke-width="1.3"/><path d="M1035.71,1308.56 A133.20,133.20 0 0 0 1046.08,1272.68 L993.01,1265.16 A79.60,79.60 0 0 1 986.82,1286.60 Z" fill="#4ade80" stroke="#fff" stroke-width="1.3"/><path d="M1046.08,1272.68 A133.20,133.20 0 0 0 1047.40,1254.00 L993.80,1254.00 A79.60,79.60 0 0 1 993.01,1265.16 Z" fill="#fbbf24" stroke="#fff" stroke-width="1.3"/><circle cx="1151.2" cy="351.80" r="8.2" fill="#60a5fa"/><circle cx="1151.2" cy="389.10" r="8.2" fill="#34d399"/><circle cx="1151.2" cy="426.40" r="8.2" fill="#fb923c"/><circle cx="1151.2" cy="463.70" r="8.2" fill="#93c5fd"/><circle cx="1151.2" cy="501.00" r="8.2" fill="#f472b6"/><circle cx="1151.2" cy="538.30" r="8.2" fill="#fcd34d"/><circle cx="1151.2" cy="575.60" r="8.2" fill="#5eead4"/><circle cx="1151.2" cy="1135.80" r="8.2" fill="#60a5fa"/></svg>
<div class="t" style="left:2402.8px;top:733px;width:85.1px;text-align:center;font-size:22px;line-height:22px;font-weight:700;color:#133a63">7846s</div></div>
<div class="t" style="left:86.40px;top:41.56px;font-size:25.436px;line-height:25px;font-weight:400;color:#15507f;letter-spacing:0.594px;-webkit-text-stroke:0.80px #15507f;">Lo-fi Metrics</div>
<div class="t" style="left:21.90px;top:109.80px;font-size:14.768px;line-height:15px;font-weight:400;color:#133a63;letter-spacing:-0.201px;-webkit-text-stroke:0.55px #133a63;">ANALYSIS</div>
<div class="t" style="left:67.40px;top:156.90px;font-size:18.117px;line-height:18px;font-weight:400;color:#2f5479;letter-spacing:-0.217px;-webkit-text-stroke:0.10px #2f5479;">Clients</div>
<div class="t" style="left:66.00px;top:218.25px;font-size:18.557px;line-height:19px;font-weight:400;color:#ffffff;letter-spacing:-0.220px;-webkit-text-stroke:0.25px #ffffff;">Dashboards</div>
<div class="t" style="left:20.75px;top:278.75px;font-size:15.197px;line-height:15px;font-weight:400;color:#133a63;letter-spacing:-0.187px;-webkit-text-stroke:0.55px #133a63;">PROJECT MANAGEMENT</div>
<div class="t" style="left:78.00px;top:328.75px;font-size:17.779px;line-height:18px;font-weight:400;color:#2f5479;letter-spacing:-0.482px;-webkit-text-stroke:0.10px #2f5479;">Goals</div>
<div class="t" style="left:20.75px;top:389.60px;font-size:14.716px;line-height:15px;font-weight:400;color:#133a63;letter-spacing:-0.224px;-webkit-text-stroke:0.55px #133a63;">DATA SOURCES</div>
<div class="t" style="left:77.30px;top:437.30px;font-size:18.280px;line-height:18px;font-weight:400;color:#2f5479;letter-spacing:-0.266px;-webkit-text-stroke:0.10px #2f5479;">Data Sources</div>
<div class="t" style="left:78.30px;top:1019.30px;font-size:17.964px;line-height:18px;font-weight:400;color:#133a63;letter-spacing:-0.323px;-webkit-text-stroke:0.25px #133a63;">Theme</div>
<div class="t" style="left:77.70px;top:1048.30px;font-size:14.470px;line-height:14px;font-weight:400;color:#6b8aa3;letter-spacing:0.499px;">System (light)</div>
<div class="t" style="left:29.60px;top:1114.60px;font-size:17.878px;line-height:18px;font-weight:400;color:#ffffff;letter-spacing:0.503px;-webkit-text-stroke:0.55px #ffffff;">HA</div>
<div class="t" style="left:79.70px;top:1107.90px;font-size:15.733px;line-height:16px;font-weight:400;color:#133a63;letter-spacing:0.737px;-webkit-text-stroke:0.55px #133a63;">harshgami.tupple</div>
<div class="t" style="left:80.70px;top:1131.50px;font-size:13.249px;line-height:13px;font-weight:400;color:#5f809b;letter-spacing:0.507px;">harshgami.tupple@gmail....</div>
<div class="t" style="left:208.20px;top:441.30px;font-size:13.081px;line-height:13px;font-weight:400;color:#ffffff;letter-spacing:0.000px;-webkit-text-stroke:0.30px #ffffff;">2</div>
<div class="t" style="left:376.50px;top:53.10px;font-size:18.217px;line-height:18px;font-weight:400;color:#5a7d99;letter-spacing:-0.240px;">Clients</div>
<div class="t" style="left:476.20px;top:52.80px;font-size:18.217px;line-height:18px;font-weight:400;color:#133a63;letter-spacing:0.457px;-webkit-text-stroke:0.55px #133a63;">tupple apps</div>
<div class="t" style="left:1977.60px;top:52.30px;font-size:17.587px;line-height:18px;font-weight:400;color:#2f5479;letter-spacing:0.211px;">Nov 4, 2025 - Dec 3, 2025</div>
<div class="t" style="left:2274.40px;top:51.80px;font-size:17.733px;line-height:18px;font-weight:400;color:#ffffff;letter-spacing:0.489px;-webkit-text-stroke:0.30px #ffffff;">Edit My Dashboards</div>
<div class="t" style="left:364.90px;top:129.90px;font-size:15.062px;line-height:15px;font-weight:400;color:#4a7190;letter-spacing:-0.054px;-webkit-text-stroke:0.55px #4a7190;">ROLL-UP DASHBOARDS</div>
<div class="t" style="left:375.80px;top:181.20px;font-size:17.803px;line-height:18px;font-weight:400;color:#ffffff;letter-spacing:0.620px;-webkit-text-stroke:0.30px #ffffff;">harsh</div>
<div class="t" style="left:459.00px;top:1071.10px;font-size:18.750px;line-height:19px;font-weight:400;color:#ffffff;letter-spacing:-0.031px;-webkit-text-stroke:0.30px #ffffff;">Add Dashboard</div>
<div class="t" style="left:726.70px;top:134.90px;font-size:21.980px;line-height:22px;font-weight:700;color:#133a63;letter-spacing:-0.251px;">harsh</div>
<div class="t" style="left:684.80px;top:213.20px;font-size:20.276px;line-height:20px;font-weight:400;color:#133a63;letter-spacing:0.530px;-webkit-text-stroke:0.55px #133a63;">Analytics</div>
<div class="t" style="left:750.20px;top:299.90px;font-size:17.811px;line-height:18px;font-weight:400;color:#133a63;letter-spacing:-0.362px;-webkit-text-stroke:0.20px #133a63;">Active Users</div>
<div class="t" style="left:1679.20px;top:299.90px;font-size:17.520px;line-height:18px;font-weight:400;color:#133a63;letter-spacing:-0.616px;-webkit-text-stroke:0.20px #133a63;">Sessions</div>
<div class="t" style="left:750.20px;top:691.90px;font-size:17.811px;line-height:18px;font-weight:400;color:#133a63;letter-spacing:-0.362px;-webkit-text-stroke:0.20px #133a63;">Active Users</div>
<div class="t" style="left:1678.20px;top:691.90px;font-size:18.032px;line-height:18px;font-weight:400;color:#133a63;letter-spacing:-0.254px;-webkit-text-stroke:0.20px #133a63;">User Engagement</div>
<div class="t" style="left:749.20px;top:1083.90px;font-size:17.885px;line-height:18px;font-weight:400;color:#133a63;letter-spacing:-0.375px;-webkit-text-stroke:0.20px #133a63;">New Users</div>
<div class="t" style="left:1678.20px;top:1083.90px;font-size:17.761px;line-height:18px;font-weight:400;color:#133a63;letter-spacing:-0.410px;-webkit-text-stroke:0.20px #133a63;">Engaged Sessions</div>
<div class="t" style="left:880.00px;top:434.10px;font-size:37.645px;line-height:38px;font-weight:700;color:#133a63;letter-spacing:1.475px;">402</div>
<div class="t" style="left:864.25px;top:485.90px;font-size:17.878px;line-height:18px;font-weight:400;color:#577a96;letter-spacing:-0.118px;">Active Users</div>
<div class="t" style="left:1175.00px;top:339.90px;font-size:18.605px;line-height:19px;font-weight:400;color:#52728e;letter-spacing:-0.173px;">Nov 4, 2025</div>
<div class="t" style="left:1175.00px;top:377.20px;font-size:18.605px;line-height:19px;font-weight:400;color:#52728e;letter-spacing:-0.173px;">Nov 5, 2025</div>
<div class="t" style="left:1175.00px;top:414.50px;font-size:18.605px;line-height:19px;font-weight:400;color:#52728e;letter-spacing:-0.173px;">Nov 6, 2025</div>
<div class="t" style="left:1175.00px;top:451.80px;font-size:18.605px;line-height:19px;font-weight:400;color:#52728e;letter-spacing:-0.173px;">Nov 7, 2025</div>
<div class="t" style="left:1175.00px;top:489.10px;font-size:18.605px;line-height:19px;font-weight:400;color:#52728e;letter-spacing:-0.173px;">Nov 8, 2025</div>
<div class="t" style="left:1175.00px;top:526.40px;font-size:18.605px;line-height:19px;font-weight:400;color:#52728e;letter-spacing:-0.173px;">Nov 9, 2025</div>
<div class="t" style="left:1175.00px;top:563.70px;font-size:18.605px;line-height:19px;font-weight:400;color:#52728e;letter-spacing:-0.206px;">Nov 10, 2025</div>
<div class="t" style="left:1517.80px;top:339.80px;font-size:18.600px;line-height:19px;font-weight:400;color:#133a63;letter-spacing:0.000px;-webkit-text-stroke:0.25px #133a63;">8</div>
<div class="t" style="left:1511.48px;top:377.10px;font-size:18.600px;line-height:19px;font-weight:400;color:#133a63;letter-spacing:0.000px;-webkit-text-stroke:0.25px #133a63;">10</div>
<div class="t" style="left:1511.48px;top:414.40px;font-size:18.600px;line-height:19px;font-weight:400;color:#133a63;letter-spacing:0.000px;-webkit-text-stroke:0.25px #133a63;">13</div>
<div class="t" style="left:1517.80px;top:451.70px;font-size:18.600px;line-height:19px;font-weight:400;color:#133a63;letter-spacing:0.000px;-webkit-text-stroke:0.25px #133a63;">6</div>
<div class="t" style="left:1511.48px;top:489.00px;font-size:18.600px;line-height:19px;font-weight:400;color:#133a63;letter-spacing:0.000px;-webkit-text-stroke:0.25px #133a63;">12</div>
<div class="t" style="left:1517.80px;top:526.30px;font-size:18.600px;line-height:19px;font-weight:400;color:#133a63;letter-spacing:0.000px;-webkit-text-stroke:0.25px #133a63;">5</div>
<div class="t" style="left:1510.88px;top:563.60px;font-size:18.600px;line-height:19px;font-weight:400;color:#133a63;letter-spacing:0.000px;-webkit-text-stroke:0.25px #133a63;">17</div>
<div class="abs" style="left:0;top:0;width:2560px;height:1168px;clip-path:inset(187px 18px 36px 662px)"><div class="t" style="left:1517.80px;top:1123.80px;font-size:18.600px;line-height:19px;font-weight:400;color:#133a63;letter-spacing:0.000px;-webkit-text-stroke:0.25px #133a63;">8</div>
<div class="t" style="left:1175.00px;top:1123.90px;font-size:18.605px;line-height:19px;font-weight:400;color:#52728e;letter-spacing:-0.173px;">Nov 4, 2025</div></div>
</div></body></html>
